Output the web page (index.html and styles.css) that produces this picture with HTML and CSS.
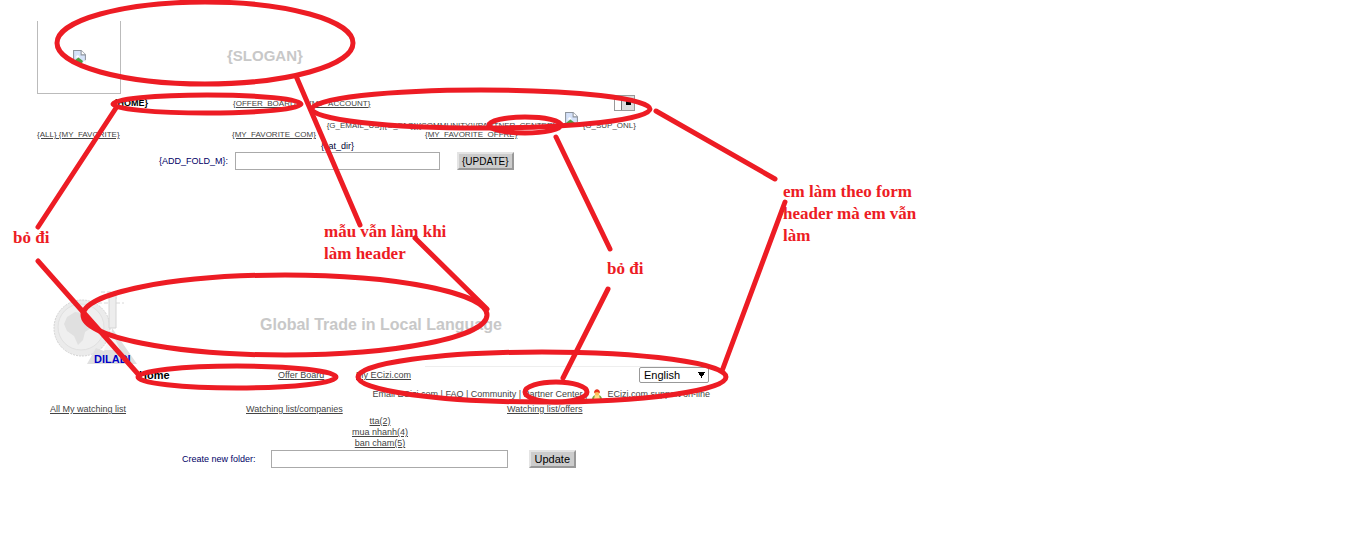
FILE: index.html
```html
<!DOCTYPE html>
<html lang="vi">
<head>
<meta charset="utf-8">
<title>Header review</title>
<link rel="stylesheet" href="styles.css">
</head>
<body>
<main class="board">
  <section class="mock template">
    <header class="masthead">
      <div class="logo-frame">
        <svg class="broken" viewBox="0 0 12 13" role="img" aria-label="Logo"><path d="M.5.5h7l4 4v8H.5z" fill="#d5e2fa" stroke="#8e959e"/><path d="M7.5.5v4h4" fill="#fff" stroke="#8e959e"/><path d="M3 6c1-2 3-1 3 1H2z" fill="#fff"/><path d="M1 12V10l4-3 4 3v2z" fill="#4b9d3f"/><path d="M7 13l5-4v4z" fill="#fff"/></svg>
      </div>
      <h1 class="slogan">{SLOGAN}</h1>
    </header>
    <nav class="nav">
      <strong class="home">{HOME}</strong>
      <a href="#">{OFFER_BOARD}</a>
      <a href="#">{MY_ACCOUNT}</a>
      <select class="lang" aria-label="Language"><option></option></select>
    </nav>
    <div class="support">
      <span>{G_EMAIL_US}|{G_FAQ}|{COMMUNITY}|{PARTNER_CENTER} |</span>
      <svg class="broken" viewBox="0 0 12 13" aria-hidden="true"><path d="M.5.5h7l4 4v8H.5z" fill="#d5e2fa" stroke="#8e959e"/><path d="M7.5.5v4h4" fill="#fff" stroke="#8e959e"/><path d="M3 6c1-2 3-1 3 1H2z" fill="#fff"/><path d="M1 12V10l4-3 4 3v2z" fill="#4b9d3f"/><path d="M7 13l5-4v4z" fill="#fff"/></svg>
      <span>{G_SUP_ONL}</span>
    </div>
    <nav class="lists">
      <a href="#">{ALL} {MY_FAVORITE}</a>
      <a href="#">{MY_FAVORITE_COM}</a>
      <a href="#">{MY_FAVORITE_OFFRE}</a>
    </nav>
    <div class="folders">{cat_dir}</div>
    <form class="create">
      <label for="f1">{ADD_FOLD_M}:</label>
      <input id="f1" type="text">
      <button type="button">{UPDATE}</button>
    </form>
  </section>

  <section class="mock live">
    <header class="masthead">
      <div class="logo">
        <svg viewBox="0 0 90 76" role="img" aria-label="DILADI">
          <circle cx="31" cy="38" r="28" fill="#ebebeb" stroke="#d2d2d2" stroke-dasharray="2 1"/>
          <circle cx="30" cy="37" r="23" fill="#efefef" stroke="#e0e0e0"/>
          <path d="M16 27l8-5 8 1 7 6-3 5 4 4-6 4-2 8-5 5-4-9-7-5-3-7z" fill="#e0e0e0"/>
          <path d="M50 2h15M47 13h26M52 8h14" stroke="#d8d8d8" stroke-dasharray="4 2" fill="none"/>
          <path d="M58 5h7v33h-7z" fill="#ededed" stroke="#d4d4d4"/>
          <path d="M61 38l25 36H36l9-16 8 3 7-13z" fill="#e0e0e0"/>
          <path d="M61 42l8 18H53z" fill="#f6f6f6"/>
          <text class="logo-text" x="43" y="73">DILADI</text>
        </svg>
      </div>
      <h1 class="slogan">Global Trade in Local Language</h1>
    </header>
    <nav class="nav">
      <strong class="home">Home</strong>
      <a href="#">Offer Board</a>
      <a href="#">My ECizi.com</a>
      <select class="lang" aria-label="Language"><option>English</option></select>
    </nav>
    <div class="support">
      <span>Email ECizi.com | FAQ | Community | Partner Center |</span>
      <svg class="person" viewBox="0 0 10 11" aria-hidden="true"><path d="M0 11c0-4 2-5 5-5s5 1 5 5z" fill="#7ba53c"/><path d="M3 6h4l1 4H2z" fill="#ffe08a"/><circle cx="5" cy="4" r="2.5" fill="#ffc05a"/><path d="M2 4c0-5 6-5 6 0L5 3z" fill="#e8321c"/></svg>
      <span>ECizi.com support on-line</span>
    </div>
    <nav class="lists">
      <a href="#">All My watching list</a>
      <a href="#">Watching list/companies</a>
      <a href="#">Watching list/offers</a>
    </nav>
    <div class="folders"><a href="#">tta(2)</a><a href="#">mua nhanh(4)</a><a href="#">ban cham(5)</a></div>
    <form class="create">
      <label for="f2">Create new folder:</label>
      <input id="f2" type="text">
      <button type="button">Update</button>
    </form>
  </section>

  <svg class="marks" width="1000" height="480" aria-hidden="true">
    <ellipse cx="205" cy="43" rx="148" ry="41"/>
    <ellipse cx="207" cy="104" rx="94" ry="9"/>
    <ellipse cx="481" cy="109" rx="169" ry="19"/>
    <ellipse cx="525" cy="125" rx="36" ry="8"/>
    <ellipse cx="285" cy="315" rx="202" ry="40"/>
    <ellipse cx="237" cy="377" rx="99" ry="11"/>
    <ellipse cx="542" cy="377" rx="184" ry="25"/>
    <ellipse cx="556" cy="392" rx="31" ry="10"/>
    <path d="M296 76L360 225M415 238L487 309M116 108L38 227M38 261L138 374M656 111L775 179M785 202L722 371M556 137L610 249M608 289L563 378"/>
  </svg>
  <p class="note note-left">bỏ đi</p>
  <p class="note note-slogan">mẫu vẫn làm khi<br>làm header</p>
  <p class="note note-partner">bỏ đi</p>
  <p class="note note-form">em làm theo form<br>header mà em vẫn<br>làm</p>
</main>
</body>
</html>
```
FILE: styles.css
```css
* { box-sizing: border-box; }
body {
  margin: 0;
  background: #fff;
  color: #444;
  font-family: "Liberation Sans", Arial, sans-serif;
  font-size: 9px;
}
.board { position: relative; }
.mock { max-width: 720px; }
a { color: #444; }
.template { font-size: 8px; padding-top: 21px; }
.live { padding-top: 120px; }
.masthead { display: flex; }
.slogan { margin: 0; color: #c8c8c8; font-size: 16px; line-height: 20px; }
.logo-frame {
  width: 84px;
  height: 73px;
  margin-left: 37px;
  border: 1px solid #bbb;
  border-top: 0;
  display: flex;
  align-items: center;
  justify-content: center;
}
.broken { width: 13px; height: 14px; }
.template .slogan { font-size: 15px; margin: 25px 0 0 106px; }
.logo { width: 90px; height: 76px; margin-left: 51px; }
.logo svg { display: block; width: 90px; height: 76px; }
.logo-text { font-size: 11px; font-weight: bold; fill: #0000c8; }
.live .slogan { margin: 25px 0 0 119px; }

.nav { display: grid; align-items: center; height: 18px; }
.home { color: #000; font-size: 9px; }
.template .nav { grid-template-columns: 119px 76px 305px 21px; padding-left: 114px; }
.live .nav {
  grid-template-columns: 139px 78px 283px 70px;
  padding-left: 139px;
  background: linear-gradient(#eee, #eee) 425px 0 / 285px 1px no-repeat;
}
.live .home { font-size: 11px; }
.lang {
  appearance: none;
  height: 16px;
  width: 100%;
  padding: 0;
  border: 1px solid #999;
  border-radius: 0;
  color: #000;
  font: 11px "Liberation Sans", Arial, sans-serif;
}
.template .lang {
  background: linear-gradient(#000, #000) 11px 4px / 5px 5px no-repeat, linear-gradient(90deg, #fff 6px, #777 6px, #777 7px, #ddd 7px);
}
.live .lang {
  padding-left: 4px;
  border-radius: 2px;
  background: conic-gradient(from -30deg at 50% 100%, #000 60deg, transparent 0) 58px 4px / 7px 6px no-repeat #fff;
}

.support { display: flex; align-items: center; justify-content: flex-end; gap: 5px; }
.template .support { align-items: flex-end; height: 18px; padding-right: 84px; }
.template .support .broken { align-self: flex-start; }
.live .support { height: 20px; padding-right: 10px; }
.person { width: 10px; height: 11px; }

.lists { display: grid; line-height: 10px; }
.template .lists { grid-template-columns: 195px 193px auto; padding-left: 37px; }
.live .lists { grid-template-columns: 196px 261px auto; padding-left: 50px; }
.folders { display: flex; flex-direction: column; align-items: center; line-height: 11px; }
.template .folders { padding-right: 45px; color: #003; font-size: 9px; line-height: 12px; }
.live .folders { padding: 2px 0 1px 40px; }

.create { display: flex; align-items: center; color: #006; font-size: 9px; }
.create input { height: 18px; padding: 0 4px; border: 1px solid #aaa; background: #fff; }
.create button {
  height: 18px;
  padding: 0 4px;
  border: 2px solid;
  border-color: #e4e4e4 #999 #999 #e4e4e4;
  background: #ccc;
  color: #000;
  font: 11px "Liberation Sans", Arial, sans-serif;
}
.template .create { padding-left: 159px; }
.template .create input { width: 205px; margin: 0 17px 0 7px; }
.template .create button { padding: 0 3px; font-size: 10px; }
.live .create { padding-left: 182px; }
.live .create input { width: 237px; margin: 0 21px 0 15px; }

.marks { position: absolute; top: 0; left: 0; fill: none; stroke: #ed1c24; stroke-width: 5; stroke-linecap: round; }
.note {
  position: absolute;
  margin: 0;
  color: #ed1c24;
  font: bold 17px/22px "Liberation Serif", "Times New Roman", serif;
  white-space: nowrap;
}
.note-left { left: 13px; top: 227px; }
.note-slogan { left: 324px; top: 221px; }
.note-partner { left: 607px; top: 258px; }
.note-form { left: 783px; top: 181px; }
```
